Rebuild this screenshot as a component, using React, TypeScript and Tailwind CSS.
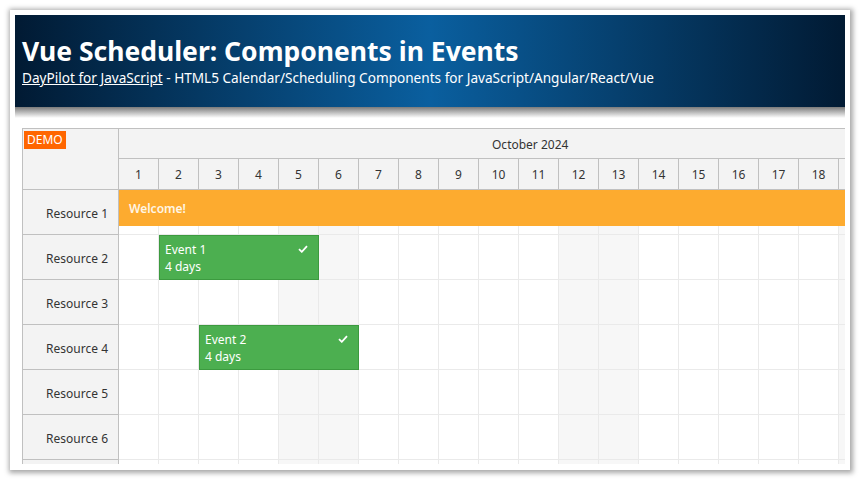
import React from 'react';

const days = Array.from({ length: 19 }, (_, i) => i + 1);
const resources = ['Resource 1', 'Resource 2', 'Resource 3', 'Resource 4', 'Resource 5', 'Resource 6', ''];
const weekend = [5, 6, 12, 13, 19];

const font = { fontFamily: '"Noto Sans", "Open Sans", sans-serif' };

const Check: React.FC = () => (
  <svg width="10" height="8" viewBox="0 0 10 8" className="absolute right-[10px] top-[9px]">
    <path d="M1 4.2 L3.8 6.8 L9 1.2" stroke="white" strokeWidth="1.8" fill="none" />
  </svg>
);

const EventBox: React.FC<{ left: number; title: string; text: string }> = ({ left, title, text }) => (
  <div
    className="absolute top-0 h-[45px] w-[160px] bg-[#4caf50] border border-[#3c9a3f] text-white text-[12px] leading-[17px] px-[5px] pt-[5px]"
    style={{ left }}
  >
    <div>{title}</div>
    <div>{text}</div>
    <Check />
  </div>
);

export default function App() {
  return (
    <div className="bg-white w-[860px] h-[480px] p-[10px]" style={font}>
      <div className="w-[840px] h-[460px] bg-white shadow-[1px_1px_5px_2px_rgba(0,0,0,0.35)] p-[5px]">
        {/* Header */}
        <div className="h-[92px] bg-[linear-gradient(to_right,#011a33_0%,#0a5f9f_50%,#011a33_100%)] text-white px-[7px] pt-[19px]">
          <h1 className="text-[26.5px] font-bold leading-[34px]">Vue Scheduler: Components in Events</h1>
          <div className="text-[13.6px] leading-[18px] mt-[1px]">
            <span className="underline">DayPilot for JavaScript</span> - HTML5 Calendar/Scheduling Components for JavaScript/Angular/React/Vue
          </div>
        </div>
        <div className="h-[11px] bg-[linear-gradient(to_bottom,#7a7a7a,#ffffff)]" />

        {/* Scheduler */}
        <div className="mt-[10px] ml-[7px] w-[823px] h-[336px] overflow-hidden border-l border-t border-[#c0c0c0] flex text-[#333] text-[12px]">
          <div className="w-[96px] shrink-0 bg-[#f3f3f3] border-r border-[#c0c0c0]">
            <div className="h-[61px] border-b border-[#c0c0c0] pt-[2px] pl-[1px]">
              <span className="inline-block bg-[#ff6600] text-white text-[12px] leading-[18px] px-[3px]">DEMO</span>
            </div>
            {resources.map((r, i) => (
              <div key={i} className="h-[45px] border-b border-[#c0c0c0] flex items-center justify-end pr-[10px] pt-[3px]">
                {r}
              </div>
            ))}
          </div>

          <div className="flex-1 overflow-hidden">
            <div className="w-[800px]">
              <div className="h-[30px] bg-[#f3f3f3] border-b border-[#c0c0c0] flex items-center pl-[373px] pt-[2px]">
                October 2024
              </div>
              <div className="h-[31px] bg-[#f3f3f3] border-b border-[#c0c0c0] flex">
                {days.map((d) => (
                  <div key={d} className="w-[40px] shrink-0 border-r border-[#c0c0c0] flex items-center justify-center pt-[1px]">
                    {d < 19 ? d : ''}
                  </div>
                ))}
              </div>
              {resources.map((r, ri) => (
                <div key={ri} className="relative h-[45px] flex">
                  {days.map((d) => (
                    <div
                      key={d}
                      className={`w-[40px] shrink-0 border-r border-b border-[#eaeaea] ${weekend.includes(d) ? 'bg-[#f7f7f7]' : 'bg-white'}`}
                    />
                  ))}
                  {ri === 0 && (
                    <div className="absolute left-0 top-0 h-[36px] w-[760px] bg-[#fdab2f] text-[#fff6e6] font-semibold text-[12px] flex items-center pl-[10px] pt-[1px]">
                      Welcome!
                    </div>
                  )}
                  {ri === 1 && <EventBox left={40} title="Event 1" text="4 days" />}
                  {ri === 3 && <EventBox left={80} title="Event 2" text="4 days" />}
                </div>
              ))}
            </div>
          </div>
        </div>
      </div>
    </div>
  );
}
